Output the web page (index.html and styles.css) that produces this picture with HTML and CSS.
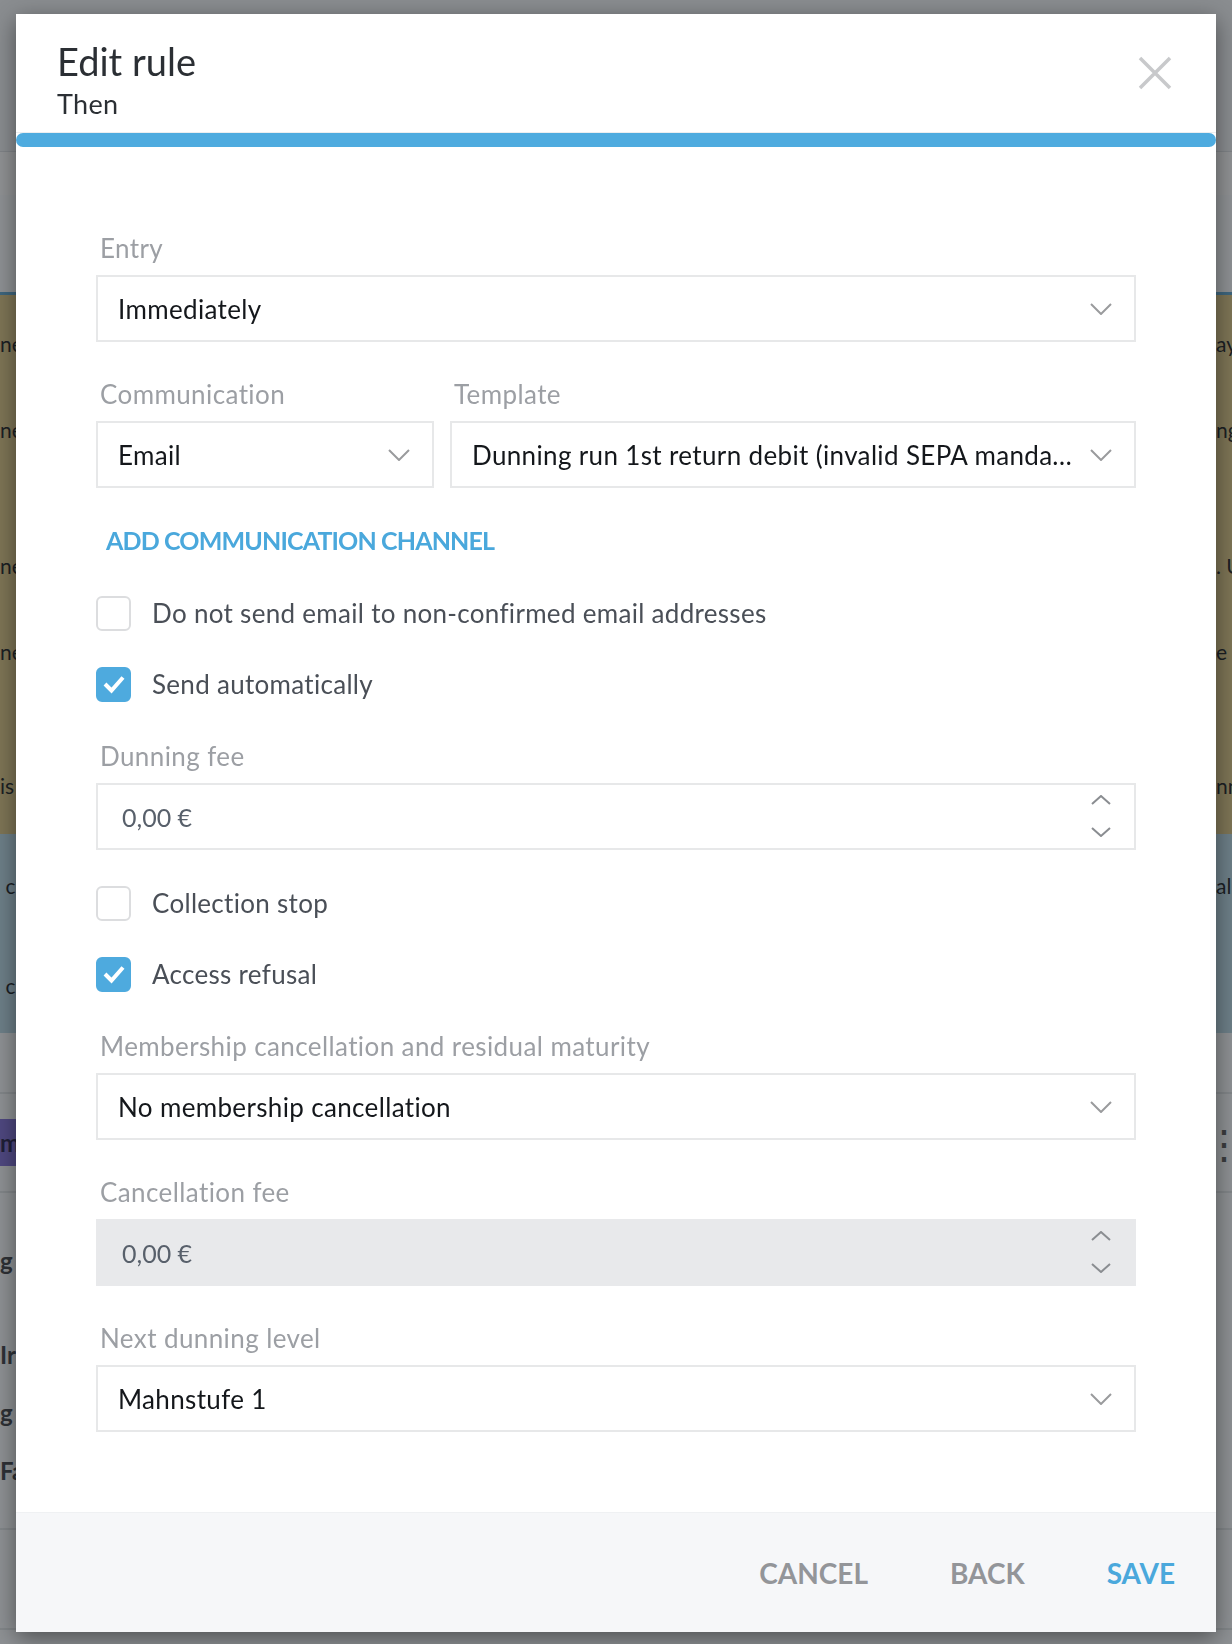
FILE: index.html
```html
<!DOCTYPE html>
<html lang="en">
<head>
  <meta charset="UTF-8">
  <title>Dunning rules</title>
  <link rel="stylesheet" href="styles.css">
</head>
<body>
  <div class="page">
    <div class="app-bar"></div>
    <div class="tabs"></div>
    <div class="filters"></div>

    <div class="rules warn">
      <div class="rule-block">
        <div class="rule-row"><span>ne</span><span>ay</span></div>
        <div class="rule-row"><span>ne</span><span>ng</span></div>
      </div>
      <div class="rule-block">
        <div class="rule-row"><span>ne</span><span>. U</span></div>
        <div class="rule-row"><span>ne</span><span>e</span></div>
      </div>
      <div class="rule-block last">
        <div class="rule-row"><span>is</span><span>nn</span></div>
      </div>
    </div>

    <div class="rules info">
      <div class="rule-row"><span>&nbsp;c</span><span>al</span></div>
      <div class="rule-row"><span>&nbsp;c</span><span></span></div>
    </div>

    <div class="list">
      <div class="list-head"></div>
      <div class="list-row level">
        <span class="badge">m</span>
        <span class="kebab">&#8942;</span>
      </div>
      <div class="list-row steps">
        <div class="step">g</div>
        <div class="step">Ir</div>
        <div class="step">g</div>
        <div class="step">Fa</div>
      </div>
      <div class="list-row"></div>
    </div>
  </div>

  <div class="overlay"></div>

  <div class="modal">
    <div class="modal-header">
      <div>
        <h1>Edit rule</h1>
        <div class="subtitle">Then</div>
      </div>
      <button class="close" title="Close">
        <svg width="34" height="34" viewBox="0 0 34 34"><path d="M2 2 L32 32 M32 2 L2 32" stroke="#c8c9cb" stroke-width="3.5" fill="none"/></svg>
      </button>
    </div>
    <div class="progress"><div class="progress-bar"></div></div>

    <div class="modal-body">
      <div class="field">
        <label>Entry</label>
        <div class="select">
          <span class="value">Immediately</span>
          <svg class="chevron" width="22" height="12" viewBox="0 0 22 12"><path d="M1 1 L11 11 L21 1" stroke="#9a9b9d" stroke-width="2" fill="none"/></svg>
        </div>
      </div>

      <div class="field-row">
        <div class="field channel">
          <label>Communication</label>
          <div class="select">
            <span class="value">Email</span>
            <svg class="chevron" width="22" height="12" viewBox="0 0 22 12"><path d="M1 1 L11 11 L21 1" stroke="#9a9b9d" stroke-width="2" fill="none"/></svg>
          </div>
        </div>
        <div class="field template">
          <label>Template</label>
          <div class="select">
            <span class="value">Dunning run 1st return debit (invalid SEPA mandate)</span>
            <svg class="chevron" width="22" height="12" viewBox="0 0 22 12"><path d="M1 1 L11 11 L21 1" stroke="#9a9b9d" stroke-width="2" fill="none"/></svg>
          </div>
        </div>
      </div>

      <a class="add-link" href="#">ADD COMMUNICATION CHANNEL</a>

      <div class="check">
        <span class="box"></span>
        <span>Do not send email to non-confirmed email addresses</span>
      </div>
      <div class="check checked">
        <span class="box"><svg width="24" height="20" viewBox="0 0 24 20"><path d="M3 10 L9.5 16.5 L21 3.5" stroke="#fff" stroke-width="4" fill="none"/></svg></span>
        <span>Send automatically</span>
      </div>

      <div class="field">
        <label>Dunning fee</label>
        <div class="number">
          <span class="value">0,00 €</span>
          <span class="spin">
            <svg width="22" height="10" viewBox="0 0 22 10"><path d="M2 9 L11 1 L20 9" stroke="#8a8d91" stroke-width="2" fill="none"/></svg>
            <svg width="22" height="10" viewBox="0 0 22 10"><path d="M2 1 L11 9 L20 1" stroke="#8a8d91" stroke-width="2" fill="none"/></svg>
          </span>
        </div>
      </div>

      <div class="check">
        <span class="box"></span>
        <span>Collection stop</span>
      </div>
      <div class="check checked">
        <span class="box"><svg width="24" height="20" viewBox="0 0 24 20"><path d="M3 10 L9.5 16.5 L21 3.5" stroke="#fff" stroke-width="4" fill="none"/></svg></span>
        <span>Access refusal</span>
      </div>

      <div class="field">
        <label>Membership cancellation and residual maturity</label>
        <div class="select">
          <span class="value">No membership cancellation</span>
          <svg class="chevron" width="22" height="12" viewBox="0 0 22 12"><path d="M1 1 L11 11 L21 1" stroke="#9a9b9d" stroke-width="2" fill="none"/></svg>
        </div>
      </div>

      <div class="field">
        <label>Cancellation fee</label>
        <div class="number disabled">
          <span class="value">0,00 €</span>
          <span class="spin">
            <svg width="22" height="10" viewBox="0 0 22 10"><path d="M2 9 L11 1 L20 9" stroke="#8a8d91" stroke-width="2" fill="none"/></svg>
            <svg width="22" height="10" viewBox="0 0 22 10"><path d="M2 1 L11 9 L20 1" stroke="#8a8d91" stroke-width="2" fill="none"/></svg>
          </span>
        </div>
      </div>

      <div class="field">
        <label>Next dunning level</label>
        <div class="select">
          <span class="value">Mahnstufe 1</span>
          <svg class="chevron" width="22" height="12" viewBox="0 0 22 12"><path d="M1 1 L11 11 L21 1" stroke="#9a9b9d" stroke-width="2" fill="none"/></svg>
        </div>
      </div>
    </div>

    <div class="modal-footer">
      <button class="btn">CANCEL</button>
      <button class="btn">BACK</button>
      <button class="btn primary">SAVE</button>
    </div>
  </div>
</body>
</html>
```

FILE: styles.css
```css
* { box-sizing: border-box; }
html, body { margin: 0; height: 100%; }
body { font-family: Lato, "Noto Sans", sans-serif; overflow: hidden; }

/* page behind the dialog */
.page { height: 1644px; background: #fbfdff; color: #15181c; font-size: 21px; }
.app-bar { height: 152px; background: #f3f5f7; border-bottom: 1px solid #dde1e5; }
.tabs { height: 43px; background: #fff; }
.filters { height: 100px; background: #fbfdff; border-bottom: 3px solid #5aa6d2; }
.rules.warn { height: 539px; background: #dbc583; }
.rules.info { height: 199px; background: #b9d9e7; padding-top: 30px; }
.rule-block { height: 222px; padding-top: 27px; }
.rule-block + .rule-block { height: 220px; }
.rule-block.last { height: 97px; }
.rule-row { height: 44px; line-height: 44px; display: flex; justify-content: space-between; margin-bottom: 42px; }
.rules.info .rule-row { margin-bottom: 56px; }
.rule-row span:last-child { width: 16px; white-space: nowrap; }
.list-head { height: 61px; border-bottom: 2px solid #e3e6e9; }
.list-row { border-bottom: 2px solid #e3e6e9; display: flex; justify-content: space-between; }
.list-row.level { height: 99px; align-items: center; }
.badge { background: #7d6bd7; color: #1d1846; width: 60px; height: 47px; line-height: 47px; font-size: 24px; font-weight: 700; }
.kebab { font-size: 40px; color: #555; margin-right: -12px; }
.list-row.steps { height: 337px; flex-direction: column; justify-content: flex-start; padding-top: 48px; font-size: 24px; font-weight: 700; color: #3a3d42; }
.step { height: 40px; line-height: 40px; margin-bottom: 54px; }
.step:nth-child(2) { margin-bottom: 18px; }
.step:nth-child(3) { margin-bottom: 18px; }
.list-row:last-child { height: 100px; }

.overlay { position: fixed; inset: 0; background: rgba(33, 37, 41, 0.5); }

/* dialog */
.modal {
  position: absolute; left: 16px; top: 14px; width: 1200px; height: 1618px;
  background: #fff; display: flex; flex-direction: column;
  box-shadow: 0 6px 22px rgba(0, 0, 0, 0.45);
}
.modal-header { display: flex; justify-content: space-between; padding: 27px 44px 12px 41px; }
.modal-header h1 { margin: 0; font-size: 38px; line-height: 41px; font-weight: 400; color: #2b2f34; }
.subtitle { margin-top: 6px; font-size: 27px; line-height: 32px; letter-spacing: 0.3px; color: #2b2f34; }
.close { background: none; border: none; padding: 0; margin-top: 15px; width: 34px; height: 34px; cursor: pointer; }
.close svg { display: block; }

.progress { border-top: 1px solid #eceef0; }
.progress-bar { height: 14px; background: #4eabdf; border-radius: 7px; }

.modal-body { flex: 1; padding: 85px 80px 0; display: flex; flex-direction: column; }
.field { margin-bottom: 36px; }
.field label { display: block; height: 32px; line-height: 32px; margin-bottom: 11px; padding-left: 4px; font-size: 26px; letter-spacing: 0.4px; color: #9c9fa4; }
.field-row { display: flex; gap: 16px; }
.field.channel { width: 338px; }
.field.template { flex: 1; min-width: 0; }

.select, .number {
  height: 67px; border: 2px solid #e7e8e9; display: flex; align-items: center;
  padding: 0 22px 0 20px; font-size: 26px; letter-spacing: 0.35px; color: #14171b;
}
.select .value { flex: 1; min-width: 0; white-space: nowrap; overflow: hidden; text-overflow: ellipsis; }
.field.template .select .value { padding-right: 16px; }
.chevron { flex: none; }

.number { padding-left: 24px; color: #58606b; font-size: 25px; letter-spacing: 0; }
.number .value { flex: 1; }
.number .spin { display: flex; flex-direction: column; gap: 22px; margin-top: -2px; }
.number .spin svg { display: block; }
.number.disabled { background: #e8e9eb; border-color: #e8e9eb; }

.add-link {
  height: 32px; line-height: 32px; margin: 0 0 40px 10px; font-size: 25px; font-weight: 700;
  letter-spacing: -0.85px; color: #4aa8dc; text-decoration: none; align-self: flex-start;
}

.check { display: flex; align-items: center; gap: 21px; height: 34px; margin-bottom: 37px; font-size: 26px; letter-spacing: 0.3px; color: #4a4f57; }
.check .box { flex: none; width: 35px; height: 35px; border: 2px solid #dcdddf; border-radius: 6px; display: flex; align-items: center; justify-content: center; }
.check.checked .box { background: #4eaade; border-color: #4eaade; }
.check + .field { margin-top: 2px; }

.modal-footer {
  height: 120px; background: #f6f7f9; border-top: 1px solid #eff1f3;
  display: flex; align-items: center; justify-content: flex-end; gap: 82px; padding-right: 41px;
}
.btn { background: none; border: none; padding: 0; font-family: inherit; font-size: 28px; font-weight: 700; color: #939599; cursor: pointer; }
.btn.primary { color: #4aa8dc; }
```
